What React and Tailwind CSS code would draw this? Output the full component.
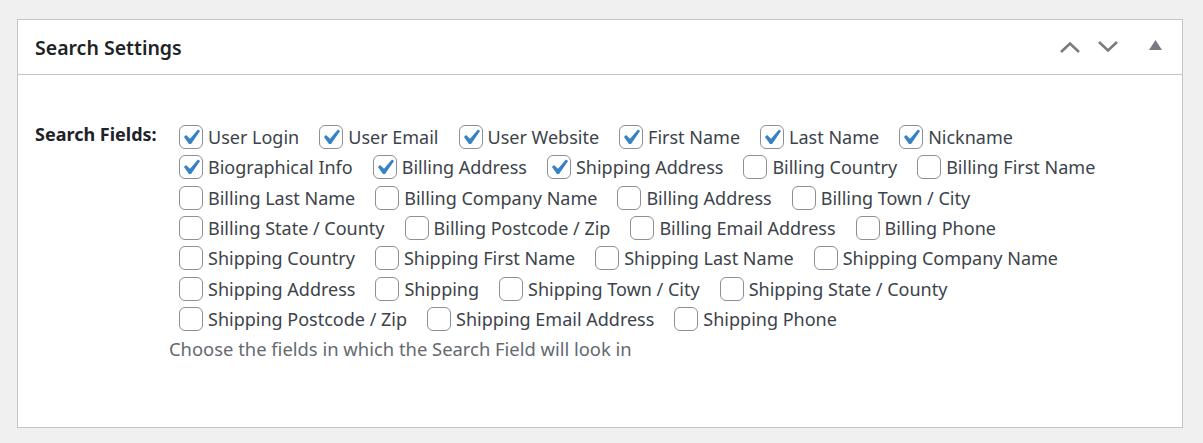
import React from "react";

const rows = [
  [["User Login", 1], ["User Email", 1], ["User Website", 1], ["First Name", 1], ["Last Name", 1], ["Nickname", 1]],
  [["Biographical Info", 1], ["Billing Address", 1], ["Shipping Address", 1], ["Billing Country", 0], ["Billing First Name", 0]],
  [["Billing Last Name", 0], ["Billing Company Name", 0], ["Billing Address", 0], ["Billing Town / City", 0]],
  [["Billing State / County", 0], ["Billing Postcode / Zip", 0], ["Billing Email Address", 0], ["Billing Phone", 0]],
  [["Shipping Country", 0], ["Shipping First Name", 0], ["Shipping Last Name", 0], ["Shipping Company Name", 0]],
  [["Shipping Address", 0], ["Shipping", 0], ["Shipping Town / City", 0], ["Shipping State / County", 0]],
  [["Shipping Postcode / Zip", 0], ["Shipping Email Address", 0], ["Shipping Phone", 0]],
];

function Box({ checked }) {
  return (
    <span className="relative w-[24px] h-[24px] shrink-0 rounded-[6px] border border-[#8c8f94] bg-white">
      {checked ? (
        <svg viewBox="0 0 20 20" className="absolute w-[31px] h-[31px] left-[-5px] top-[-4px]">
          <path d="M14.83 4.89l1.34.94-5.81 8.38H9.02L5.78 9.67l1.34-1.25 2.57 2.4z" fill="#3582c4" />
        </svg>
      ) : null}
    </span>
  );
}

export default function App() {
  return (
    <div className="w-full h-[443px] bg-[#f0f0f1] pt-[19px] pl-[17px] pr-[20px]" style={{ fontFamily: '"Noto Sans", sans-serif' }}>
      <div className="h-[409px] border border-[#c3c4c7] bg-white">
        <div className="h-[55px] border-b border-[#c3c4c7] flex items-center pl-[17px] pr-[20px]">
          <h2 className="text-[19.5px] font-semibold text-[#1d2327] flex-1 leading-none mt-[2px]">Search Settings</h2>
          <svg width="22" height="14" viewBox="0 0 22 14" className="mr-[16px]">
            <path d="M2 12 L11 3.5 L20 12" fill="none" stroke="#787c82" strokeWidth="2.6" />
          </svg>
          <svg width="22" height="14" viewBox="0 0 22 14" className="mr-[30px]">
            <path d="M2 2 L11 10.5 L20 2" fill="none" stroke="#787c82" strokeWidth="2.6" />
          </svg>
          <svg width="13" height="10" viewBox="0 0 13 10" className="mb-[5px]">
            <path d="M6.5 0 L13 10 L0 10 Z" fill="#787c82" />
          </svg>
        </div>
        <div className="flex pt-[47px] pl-[17px]">
          <div className="w-[134px] shrink-0 text-[18px] font-bold text-[#1d2327] leading-[30px] -mt-[3px]">Search Fields:</div>
          <div className="flex flex-col">
            <div className="flex flex-col pl-[10px]">
              {rows.map((row, i) => (
                <div key={i} className="flex items-center h-[30.3px] gap-[20px]">
                  {row.map(([label, c], j) => (
                    <label key={j} className="flex items-center gap-[5px] text-[18px] text-[#3c434a] leading-none whitespace-nowrap">
                      <Box checked={!!c} />
                      <span>{label}</span>
                    </label>
                  ))}
                </div>
              ))}
            </div>
            <p className="text-[18.4px] text-[#646970] mt-[2px] leading-[26px]">Choose the fields in which the Search Field will look in</p>
          </div>
        </div>
      </div>
    </div>
  );
}
